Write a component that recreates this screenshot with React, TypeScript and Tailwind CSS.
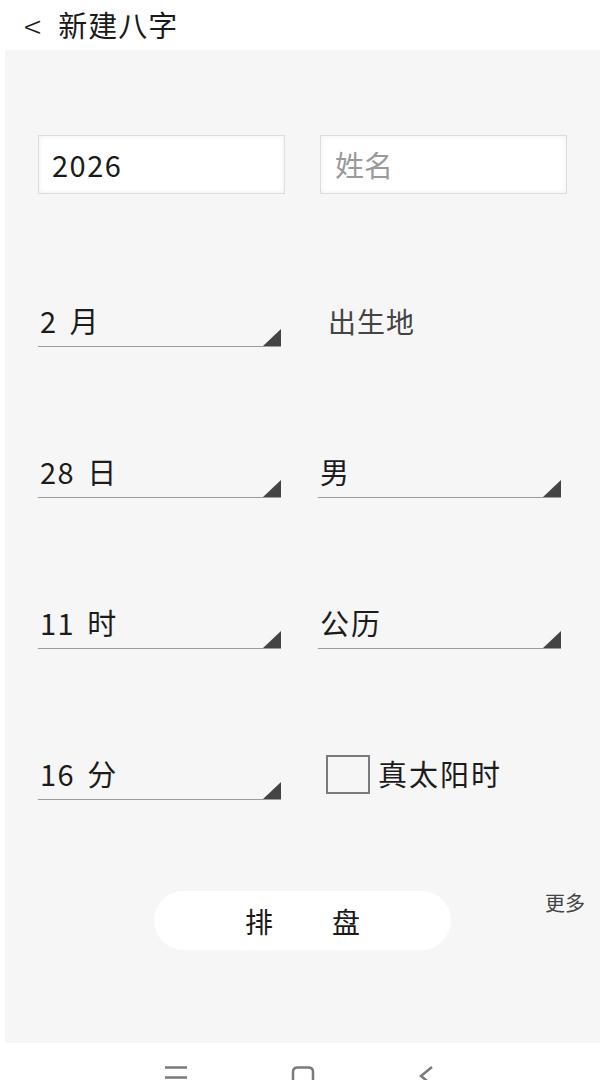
import React from "react";

const font = { fontFamily: '"Noto Sans CJK SC", "Noto Sans", sans-serif' };

function Triangle() {
  return (
    <svg width="18" height="17" viewBox="0 0 18 17" className="absolute right-0 bottom-0">
      <polygon points="18,0 18,17 0,17" fill="#444444" />
    </svg>
  );
}

function Select({ value, unit }: { value?: string; unit: string }) {
  return (
    <div className="relative flex h-[52px] w-[243px] items-center gap-[12px] border-b-[1.5px] border-[#9c9c9c] pl-[2px] text-[29px] text-[#1c1c1c]">
      {value && <span className="tracking-[1.5px]">{value}</span>}
      <span className="tracking-[2px]">{unit}</span>
      <Triangle />
    </div>
  );
}

export default function App() {
  return (
    <div className="flex h-[1080px] w-[607px] flex-col overflow-hidden bg-white" style={font}>
      <div className="flex h-[50px] shrink-0 items-center gap-[17px] pl-[24px] text-[29px] text-[#1a1a1a]">
        <span className="text-[32px] font-light">&lt;</span>
        <span className="tracking-[1px]">新建八字</span>
      </div>

      <div className="mr-[7px] ml-[5px] flex h-[993px] shrink-0 flex-col bg-[#f6f6f6] px-[33px] pt-[85px]">
        <div className="grid grid-cols-2 gap-x-[35px]">
          <div className="flex flex-col">
            <div className="flex h-[59px] items-center border border-[#dddddd] bg-white pl-[13px] text-[29px] tracking-[1.5px] text-[#1a1a1a] shadow-[inset_0_0_5px_rgba(0,0,0,0.07)]">
              2026
            </div>
            <div className="mt-[101px] flex flex-col gap-[99px]">
              <Select value="2" unit="月" />
              <Select value="28" unit="日" />
              <Select value="11" unit="时" />
              <Select value="16" unit="分" />
            </div>
          </div>

          <div className="flex flex-col">
            <div className="flex h-[59px] items-center border border-[#dddddd] bg-white pl-[14px] text-[29px] text-[#9a9a9a] shadow-[inset_0_0_5px_rgba(0,0,0,0.07)]">
              姓名
            </div>
            <div className="mt-[101px] flex flex-col gap-[99px]">
              <div className="flex h-[52px] items-center pl-[8px] text-[28px] tracking-[1px] text-[#444444]">出生地</div>
              <div className="-ml-[2px]">
                <Select unit="男" />
              </div>
              <div className="-ml-[2px]">
                <Select unit="公历" />
              </div>
              <div className="flex h-[52px] items-center gap-[8px] pl-[6px]">
                <div className="h-[39px] w-[44px] border-2 border-[#7a7a7a] bg-[#f6f6f6]" />
                <span className="text-[29px] tracking-[2px] text-[#1c1c1c]">真太阳时</span>
              </div>
            </div>
          </div>
        </div>

        <div className="relative mt-[91px] flex justify-center">
          <div className="flex h-[59px] w-[297px] items-center justify-center gap-[59px] rounded-full bg-white text-[28px] text-[#1a1a1a]">
            <span>排</span>
            <span>盘</span>
          </div>
          <span className="absolute -top-[3px] right-[-18px] text-[20px] text-[#444444]">更多</span>
        </div>
      </div>

      <div className="flex min-h-0 flex-1 justify-center gap-[103px] overflow-hidden pt-[23px] pr-[10px]">
        <svg width="24" height="14" viewBox="0 0 24 14" className="shrink-0">
          <line x1="1" y1="1.5" x2="23" y2="1.5" stroke="#7a7a7a" strokeWidth="2.5" />
          <line x1="1" y1="11.5" x2="23" y2="11.5" stroke="#7a7a7a" strokeWidth="2.5" />
        </svg>
        <svg width="24" height="20" viewBox="0 0 24 20" className="shrink-0">
          <path d="M2 20 V6 Q2 1.5 6.5 1.5 H17.5 Q22 1.5 22 6 V20" fill="none" stroke="#7a7a7a" strokeWidth="2.5" />
        </svg>
        <svg width="16" height="20" viewBox="0 0 16 20" className="shrink-0">
          <path d="M14 1 L3 10 L14 19" fill="none" stroke="#7a7a7a" strokeWidth="2.5" />
        </svg>
      </div>
    </div>
  );
}
